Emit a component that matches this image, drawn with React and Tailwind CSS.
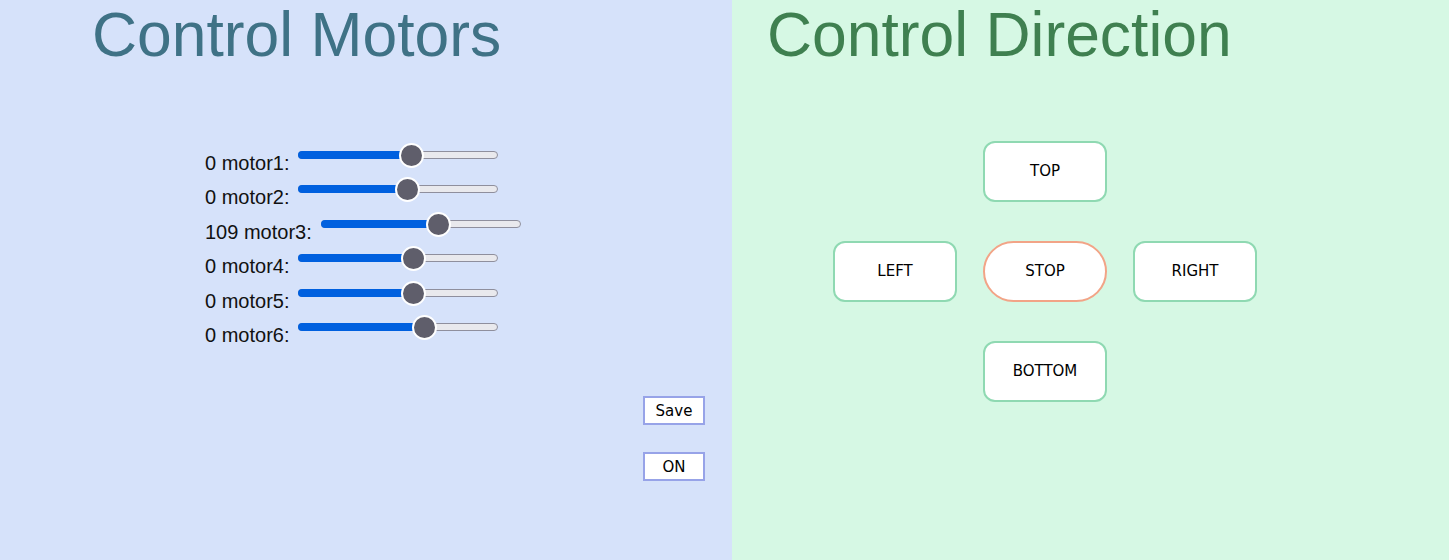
import React from 'react';

const motors = [
  { label: '0 motor1:', thumb: 113 },
  { label: '0 motor2:', thumb: 109 },
  { label: '109 motor3:', thumb: 118 },
  { label: '0 motor4:', thumb: 115 },
  { label: '0 motor5:', thumb: 115 },
  { label: '0 motor6:', thumb: 126 },
];

function Slider({ thumb }) {
  return (
    <div className="relative w-[200px] h-[30px] shrink-0 ml-[1px]">
      <div className="absolute left-0 right-0 top-[11px] h-[8px] rounded-full bg-[#e9e9ed] border border-[#8f8f9d]" />
      <div
        className="absolute left-0 top-[11px] h-[8px] rounded-full bg-[#0060df]"
        style={{ width: thumb }}
      />
      <div
        className="absolute top-[3px] w-[25px] h-[25px] rounded-full bg-[#5f5e6b] border-2 border-white"
        style={{ left: thumb - 12.5 }}
      />
    </div>
  );
}

function DirButton({ children, stop }) {
  return (
    <button
      type="button"
      className={`w-[124px] h-[61px] bg-white border-2 text-[15px] text-black ${
        stop ? 'rounded-full border-[#f2a487]' : 'rounded-[12px] border-[#8fd9b2]'
      }`}
      style={{ fontFamily: '"DejaVu Sans", sans-serif' }}
    >
      {children}
    </button>
  );
}

export default function App() {
  return (
    <div className="flex w-[1449px] h-[560px] overflow-hidden" style={{ fontFamily: '"Liberation Sans", Arial, sans-serif' }}>
      <div className="w-[732px] h-full bg-[#d6e2fa] flex flex-col">
        <h1 className="text-[62.4px] leading-[70px] font-normal text-[#3f7286] pl-[92px]">Control Motors</h1>
        <div className="flex flex-col pl-[205px] mt-[70px]">
          {motors.map((m) => (
            <div key={m.label} className="flex h-[34.4px] items-start">
              <span className="text-[20px] leading-[20px] text-[#111] pt-[13px] mr-[8px] whitespace-nowrap">{m.label}</span>
              <Slider thumb={m.thumb} />
            </div>
          ))}
        </div>
        <div className="flex flex-col items-start pl-[643px] mt-[50px] gap-[27px]">
          <button
            type="button"
            className="w-[62px] h-[29px] bg-white border-2 border-[#97a3e8] text-[15px] text-black"
            style={{ fontFamily: '"DejaVu Sans", sans-serif' }}
          >
            Save
          </button>
          <button
            type="button"
            className="w-[62px] h-[29px] bg-white border-2 border-[#97a3e8] text-[15px] text-black"
            style={{ fontFamily: '"DejaVu Sans", sans-serif' }}
          >
            ON
          </button>
        </div>
      </div>
      <div className="flex-1 h-full bg-[#d6f8e4] flex flex-col">
        <h1 className="text-[62.4px] leading-[70px] font-normal text-[#3f8050] pl-[35px]">Control Direction</h1>
        <div className="grid grid-cols-[124px_124px_124px] gap-x-[26px] gap-y-[39px] pl-[101px] mt-[71px]">
          <div />
          <DirButton>TOP</DirButton>
          <div />
          <DirButton>LEFT</DirButton>
          <DirButton stop>STOP</DirButton>
          <DirButton>RIGHT</DirButton>
          <div />
          <DirButton>BOTTOM</DirButton>
          <div />
        </div>
      </div>
    </div>
  );
}
